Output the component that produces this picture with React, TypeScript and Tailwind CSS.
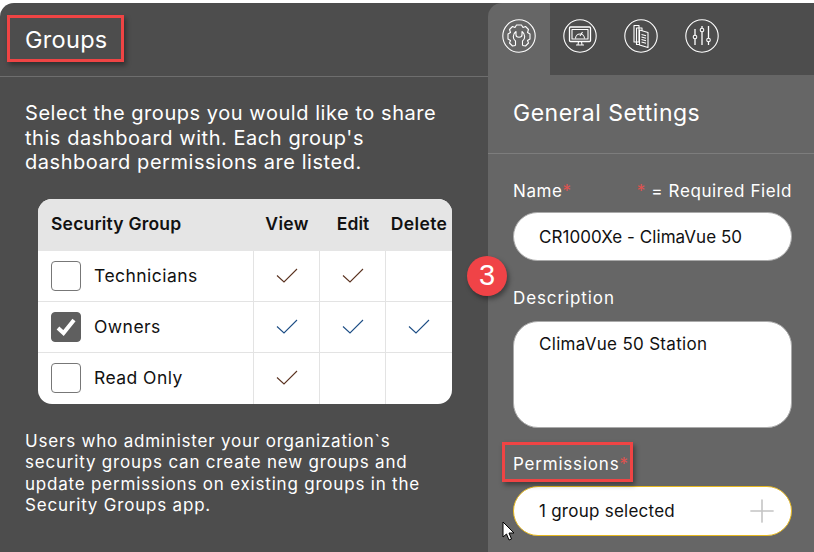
import { Plus } from 'lucide-react';

const font = { fontFamily: 'Inter, sans-serif' };

const Tick = ({ color }: { color: string }) => (
  <svg width="22" height="16" viewBox="0 0 22 16" fill="none" stroke={color} strokeWidth="1.1">
    <path d="M1 7.5 L8 14 L21 1" />
  </svg>
);

const rows = [
  { name: 'Technicians', checked: false, color: '#5c3422', ticks: [true, true, false] },
  { name: 'Owners', checked: true, color: '#1f4f86', ticks: [true, true, true] },
  { name: 'Read Only', checked: false, color: '#5c3422', ticks: [true, false, false] },
];

const TabIcon = ({ children }: { children: React.ReactNode }) => (
  <svg width="34" height="34" viewBox="0 0 34 34" fill="none" stroke="white" strokeWidth="1.1" strokeLinejoin="round">
    <circle cx="17" cy="17" r="16.2" />
    {children}
  </svg>
);

const App = () => {
  return (
    <div className="relative w-[814px] h-[552px] overflow-hidden bg-white pt-[3px] text-white" style={font}>
      <div className="flex h-full">
        {/* Groups panel */}
        <div className="w-[488px] bg-[#4d4d4d] rounded-tl-[14px]">
          <div className="h-[74px] border-b border-[#6e6e6e] pl-[25px] pt-[21px] text-[23.5px] leading-[32px] tracking-[0.3px]">
            Groups
          </div>
          <p className="pl-[25px] pt-[24px] text-[20px] leading-[24.5px] tracking-[0.55px] w-[470px]">
            Select the groups you would like to share this dashboard with. Each group's dashboard permissions are listed.
          </p>

          <div className="ml-[38px] mt-[24px] w-[414px] rounded-[14px] overflow-hidden bg-white text-[#111]">
            <div className="grid grid-cols-[216px_66px_66px_66px] h-[52px] bg-[#e5e5e5] items-center text-[17.5px] font-semibold">
              <div className="pl-[13px] tracking-[0.2px]">Security Group</div>
              <div className="text-center tracking-[0.3px]">View</div>
              <div className="text-center">Edit</div>
              <div className="text-center tracking-[0.4px]">Delete</div>
            </div>
            {rows.map((row, i) => (
              <div
                key={row.name}
                className={`grid grid-cols-[216px_66px_66px_66px] h-[51px] ${i < 2 ? 'border-b border-[#e3e3e3]' : ''}`}
              >
                <div className="flex items-center pl-[13px] gap-[13px] border-r border-[#e3e3e3]">
                  <div
                    className={`w-[30px] h-[30px] rounded-[4px] flex items-center justify-center border ${
                      row.checked ? 'bg-[#5f5f5f] border-[#5f5f5f]' : 'bg-white border-[#777]'
                    }`}
                  >
                    {row.checked && (
                      <svg width="20" height="18" viewBox="0 0 20 18" fill="none" stroke="white" strokeWidth="4">
                        <path d="M2 10 L7.5 15 L18 2" />
                      </svg>
                    )}
                  </div>
                  <span className="pt-[1px] text-[17.5px] tracking-[0.45px]">{row.name}</span>
                </div>
                {row.ticks.map((on, j) => (
                  <div
                    key={j}
                    className={`flex items-center justify-center ${j < 2 ? 'border-r border-[#e3e3e3]' : ''}`}
                  >
                    {on && <Tick color={row.color} />}
                  </div>
                ))}
              </div>
            ))}
          </div>

          <p className="pl-[25px] pt-[27px] text-[17px] leading-[21.5px] tracking-[0.8px] whitespace-nowrap">
            Users who administer your organization`s
            <br />
            security groups can create new groups and
            <br />
            update permissions on existing groups in the
            <br />
            Security Groups app.
          </p>
        </div>

        {/* Settings panel */}
        <div className="flex-1 flex flex-col bg-[#4d4d4d]">
          <div className="flex h-[72px] shrink-0">
            <div className="w-[62px] bg-[#666666] rounded-tl-[14px] pl-[14px] pt-[16px]">
              <TabIcon>
                <path d="M13.5 26.5 L10.5 27 L7.5 24 L8.5 21.5 L6 20 V15 L8.5 13.5 L7.5 10.5 L10.5 7.5 L13 8.5 L14.5 6 H19.5 L21 8.5 L23.5 7.5 L26.5 10.5 L25.5 13.5 L28 15 V20 L25.5 21.5 L26.5 24 L23.5 27 L20.5 26.5" />
                <path d="M13.5 26.5 V22 C10.5 20 10.5 15 14 12.5 V16 C14 19 20 19 20 16 V12.5 C23.5 15 23.5 20 20.5 22 V26.5" />
              </TabIcon>
            </div>
            <div className="pl-[13px] pt-[16px]">
              <TabIcon>
                <rect x="6.5" y="8" width="21" height="14.5" rx="1" strokeWidth="1.3" />
                <rect x="9" y="10.5" width="16" height="9.5" />
                <path d="M12.5 19.5 A4.5 4.5 0 0 1 21.5 19.5 M17 17 L19.5 13 M13 26 H21 M15.5 22.5 L15 26 M18.5 22.5 L19 26" />
              </TabIcon>
            </div>
            <div className="pl-[27px] pt-[16px]">
              <TabIcon>
                <path d="M10 6.5 H15 V23 H10 Z M12.5 9 H18 V25.5 H12.5 Z" />
                <path d="M15.5 11 L24 13.5 V28.5 L15.5 26 Z" fill="#4d4d4d" />
                <path d="M17.5 15.5 L22 16.8 M17.5 18 L22 19.3 M17.5 20.5 L22 21.8 M17.5 23 L22 24.3" />
              </TabIcon>
            </div>
            <div className="pl-[27px] pt-[16px]">
              <TabIcon>
                <path d="M10 10 V26 M17 7 V26 M23.5 7 V26" strokeWidth="1.3" />
                <circle cx="10" cy="18" r="1.8" fill="#4d4d4d" />
                <circle cx="17" cy="11" r="1.8" fill="#4d4d4d" />
                <circle cx="23.5" cy="21" r="1.8" fill="#4d4d4d" />
              </TabIcon>
            </div>
          </div>

          <div className="flex-1 bg-[#666666]">
            <div className="h-[79px] border-b border-[#7d7d7d] pl-[25px] pt-[22px] text-[23px] leading-[32px] tracking-[0.5px]">
              General Settings
            </div>

            <div className="px-[22px] pl-[25px] pt-[26px]">
              <div className="flex justify-between text-[17px] leading-[22px] tracking-[0.6px]">
                <span>
                  Name<span className="text-[#e0524f]">*</span>
                </span>
                <span>
                  <span className="text-[#e0524f]">*</span> = Required Field
                </span>
              </div>
              <div className="mt-[10px] h-[49px] rounded-[25px] bg-white border border-[#aaa] pl-[25px] pt-[2px] flex items-center text-[#111] text-[17px] tracking-[0.05px]">
                CR1000Xe - ClimaVue 50
              </div>
              <div className="mt-[26px] text-[17px] leading-[22px] tracking-[0.9px]">Description</div>
              <div className="mt-[12px] h-[107px] rounded-[25px] bg-white border border-[#aaa] pl-[25px] pt-[10px] text-[#111] text-[17px] tracking-[0.3px]">
                ClimaVue 50 Station
              </div>
              <div className="mt-[25px] text-[17px] leading-[22px] tracking-[0.8px]">
                Permissions<span className="text-[#e0524f]">*</span>
              </div>
              <div className="mt-[11px] h-[50px] rounded-[25px] bg-white border border-[#e6b820] pl-[25px] pr-[10px] flex items-center justify-between text-[#111] text-[17px] tracking-[0.25px]">
                <span className="pt-[2px]">1 group selected</span>
                <Plus size={38} strokeWidth={1} color="#c4c4c4" />
              </div>
            </div>
          </div>
        </div>
      </div>

      {/* Annotations */}
      <div className="absolute left-[7px] top-[15px] w-[117px] h-[47px] border-[3px] border-[#ef4444] shadow-[2px_3px_5px_rgba(0,0,0,0.4)]" />
      <div className="absolute left-[502px] top-[442px] w-[131px] h-[40px] border-[3px] border-[#ef4444] shadow-[2px_3px_5px_rgba(0,0,0,0.4)]" />
      <div
        className="absolute left-[467px] top-[256px] w-[40px] h-[40px] rounded-full bg-[#f04347] shadow-[2px_3px_5px_rgba(0,0,0,0.4)] flex items-center justify-center text-[29px]"
        style={{ fontFamily: '"Liberation Sans", sans-serif' }}
      >
        3
      </div>
      <svg className="absolute left-[502px] top-[521px]" width="14" height="20" viewBox="0 0 14 20" fill="white" stroke="black" strokeWidth="1">
        <path d="M1 1 V16 L4.5 13 L7 19 L9.5 18 L7 12 H12 Z" />
      </svg>
    </div>
  );
};

export default App;
